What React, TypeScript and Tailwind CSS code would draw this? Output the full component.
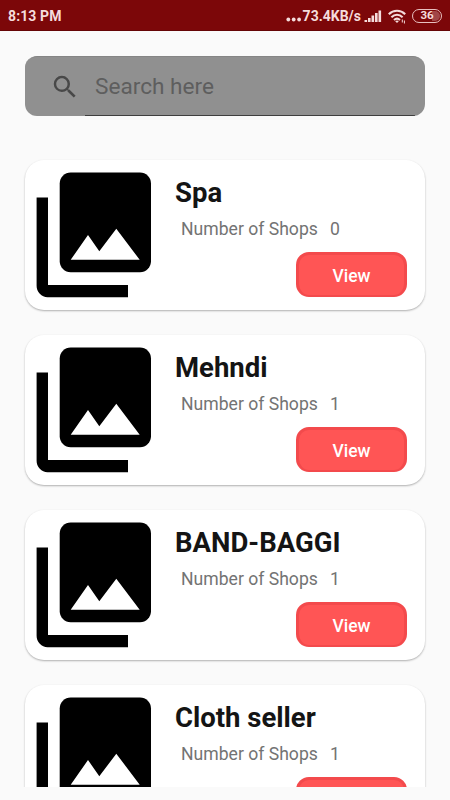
import React from "react";

const shops = [
    { name: "Spa", count: 0 },
    { name: "Mehndi", count: 1 },
    { name: "BAND-BAGGI", count: 1 },
    { name: "Cloth seller", count: 1 },
];

const StatusBar = () => {
    return (
        <div className="bg-[#7c0709] h-[31px] shrink-0 flex items-center justify-between pl-[8px] pr-[8px] pt-[2px] text-[#f5dcdc] border-b border-[#650506]">
            <div className="text-[14px] font-bold leading-none tracking-[0.1px]">8:13 PM</div>
            <div className="flex items-center">
                <svg width="17" height="14" viewBox="0 0 17 14" fill="currentColor">
                    <circle cx="2.3" cy="10.5" r="1.9" />
                    <circle cx="7.7" cy="10.5" r="1.9" />
                    <circle cx="13.1" cy="10.5" r="1.9" />
                </svg>
                <div className="text-[14px] font-bold leading-none whitespace-nowrap">73.4KB/s</div>
                <svg className="ml-[3px]" width="18" height="14" viewBox="0 0 18 14" fill="currentColor">
                    <rect x="0.5" y="11" width="2.6" height="2" />
                    <rect x="4" y="9" width="2.6" height="4" />
                    <rect x="7.5" y="6.5" width="2.6" height="6.5" />
                    <rect x="11" y="4" width="2.6" height="9" />
                    <rect x="14.5" y="1.5" width="2.6" height="11.5" />
                </svg>
                <svg className="ml-[6px]" width="19" height="15" viewBox="0 0 19 15" fill="none" stroke="currentColor" strokeWidth="2.1">
                    <path d="M0.8 5.2C5.4 0.6 12.6 0.6 17.2 5.2" />
                    <path d="M3.4 8.2C6.8 5 11.2 5 14.6 8.2" />
                    <path d="M6 11C8 9.2 10 9.2 12 11" />
                    <path d="M7.2 12.2L9 14L10.8 12.2Q9 10.8 7.2 12.2Z" fill="currentColor" stroke="none" />
                    <path d="M14.3 10.5V13.5M16.4 11.5V14.5" strokeWidth="1" />
                </svg>
                <div className="ml-[5px] w-[30px] h-[14px] rounded-full border-[1.5px] border-[#e8c0c0] p-px">
                    <div className="h-full rounded-full flex items-center justify-center text-[11.5px] font-bold leading-none bg-linear-to-r from-transparent from-70% to-[#a04648] to-70%">
                        36
                    </div>
                </div>
            </div>
        </div>
    );
};

const GalleryIcon = () => {
    return (
        <svg className="shrink-0" width="116" height="126" viewBox="0 0 116 126">
            <rect x="23.7" y="0.5" width="91.3" height="99.8" rx="11" />
            <path d="M0.6 25.5H12V113H92V125.2H11.5A10.9 11.5 0 0 1 0.6 113.7Z" />
            <path d="M34.7 87.8L52 63L63.3 79.3L80.3 56.7L103.7 87.8Z" fill="#fff" />
        </svg>
    );
};

const ShopCard = ({ name, count }: { name: string; count: number }) => {
    return (
        <div className="h-[150px] shrink-0 rounded-[19px] bg-white shadow-[0_1px_2px_rgba(0,0,0,0.3)] flex pl-[11px] pt-[12px] pr-[18px]">
            <GalleryIcon />
            <div className="flex-1 flex flex-col ml-[23px]">
                <div className="h-[41px] text-[27.5px] leading-[41px] font-bold text-[#141414] whitespace-nowrap">{name}</div>
                <div className="mt-[5px] ml-[6px] flex text-[17.6px] leading-[22px] text-[#737373]">
                    <span className="w-[149px] whitespace-nowrap">Number of Shops</span>
                    <span>{count}</span>
                </div>
                <button className="mt-[12px] self-end w-[111px] h-[45px] shrink-0 rounded-[13px] bg-[#ff5555] border-[3px] border-b-[2px] border-[#f34a4c] text-white text-[17.5px] font-medium leading-none pt-[3px]">
                    View
                </button>
            </div>
        </div>
    );
};

const App = () => {
    return (
        <div className="w-[450px] h-[800px] overflow-hidden flex flex-col bg-[#fafafa] font-['Roboto',sans-serif]">
            <StatusBar />

            {/* Search */}
            <div className="mx-[25px] mt-[25px] h-[60px] shrink-0 rounded-[12px] bg-[#909090] border-t border-[#858585] overflow-hidden flex items-stretch">
                <svg className="ml-[25px] mt-[14.5px] shrink-0" width="30" height="30" viewBox="0 0 24 24" fill="#484848">
                    <path d="M15.5 14h-.79l-.28-.27A6.471 6.471 0 0 0 16 9.5 6.5 6.5 0 1 0 9.5 16c1.61 0 3.09-.59 4.23-1.57l.27.28v.79l5 4.99L20.49 19l-4.99-5zm-6 0C7.01 14 5 11.99 5 9.5S7.01 5 9.5 5 14 7.01 14 9.5 11.99 14 9.5 14z" />
                </svg>
                <div className="ml-[5px] mr-[10px] pl-[10px] flex-1 border-b border-[#3e3e3e] text-[22.6px] leading-[59px] text-[#5e5e5e]">
                    Search here
                </div>
            </div>

            {/* Shop list */}
            <div className="mt-[34px] h-[637px] shrink-0 overflow-hidden px-[25px] pt-[10px] flex flex-col gap-[25px]">
                {shops.map((shop) => (
                    <ShopCard key={shop.name} name={shop.name} count={shop.count} />
                ))}
            </div>
        </div>
    );
};

export default App;
